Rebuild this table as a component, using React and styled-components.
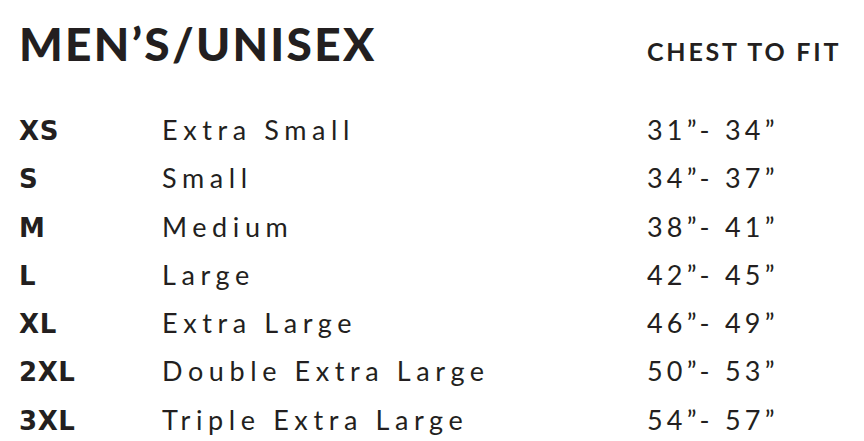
import React from 'react';
import styled, { createGlobalStyle } from 'styled-components';

const GlobalStyle = createGlobalStyle`
  html, body {
    margin: 0;
    padding: 0;
    background: #fff;
  }
  body {
    font-family: Lato, "Liberation Sans", sans-serif;
    color: #231f20;
  }
`;

const Chart = styled.div`
  width: 864px;
  height: 441px;
  padding: 18px 0 0 19px;
  box-sizing: border-box;
  overflow: hidden;
`;

const HeaderRow = styled.div`
  display: grid;
  grid-template-columns: 628px 1fr;
  align-items: baseline;
  height: 88px;
`;

const Title = styled.h1`
  margin: 0;
  font-size: 46px;
  font-weight: 900;
  letter-spacing: 2.3px;
  line-height: 52px;
`;

const ColumnLabel = styled.div`
  font-size: 25px;
  font-weight: 700;
  letter-spacing: 2.8px;
`;

const Row = styled.div`
  display: grid;
  grid-template-columns: 143px 485px 1fr;
  align-items: baseline;
  height: 48.3px;
  line-height: 48px;
  font-size: 27px;
`;

const Size = styled.span`
  font-family: "DejaVu Sans", sans-serif;
  font-size: 26px;
  font-weight: 700;
  letter-spacing: 0.6px;
`;

const Name = styled.span`
  font-weight: 400;
  letter-spacing: 5.6px;
`;

const Range = styled.span`
  font-weight: 400;
  letter-spacing: 4.2px;
`;

const sizes = [
  ['XS', 'Extra Small', '31”- 34”'],
  ['S', 'Small', '34”- 37”'],
  ['M', 'Medium', '38”- 41”'],
  ['L', 'Large', '42”- 45”'],
  ['XL', 'Extra Large', '46”- 49”'],
  ['2XL', 'Double Extra Large', '50”- 53”'],
  ['3XL', 'Triple Extra Large', '54”- 57”'],
];

function App() {
  return (
    <Chart>
      <GlobalStyle />
      <HeaderRow>
        <Title>MEN’S/UNISEX</Title>
        <ColumnLabel>CHEST TO FIT</ColumnLabel>
      </HeaderRow>
      {sizes.map(([code, name, range]) => (
        <Row key={code}>
          <Size>{code}</Size>
          <Name>{name}</Name>
          <Range>{range}</Range>
        </Row>
      ))}
    </Chart>
  );
}

export default App;
